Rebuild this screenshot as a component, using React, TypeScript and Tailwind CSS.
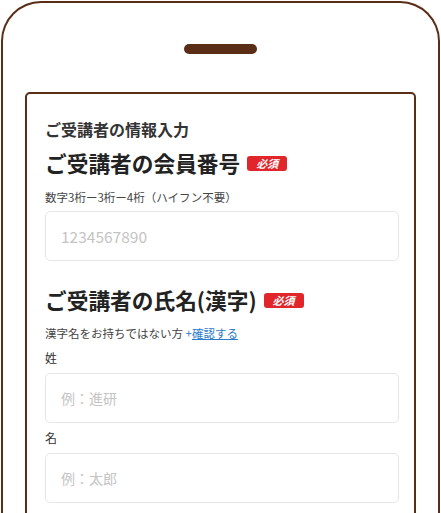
const font = "font-['Noto_Sans_CJK_JP','Noto_Sans',sans-serif]";

function Required() {
  return (
    <span className="ml-[7px] inline-flex h-[15px] w-[40px] items-center justify-center rounded-[3px] bg-[#e0262b] text-[11px] font-bold italic leading-none text-white">
      必須
    </span>
  );
}

function Field({ placeholder, size = "text-[14px]" }: { placeholder: string; size?: string }) {
  return (
    <input
      placeholder={placeholder}
      className={
        "block h-[50px] w-full rounded-[5px] border border-[#e6e6e6] bg-white px-[15px] text-[#333] outline-none placeholder:text-[#c4c4c4] " +
        size
      }
    />
  );
}

export default function App() {
  return (
    <div className={"h-[513px] overflow-hidden bg-white pt-px " + font}>
      {/* phone frame */}
      <div className="mx-px h-[560px] rounded-t-[40px] border-2 border-b-0 border-[#5a2d17] px-[22px] pt-[41px]">
        <div className="mx-auto h-[10px] w-[73px] rounded-full bg-[#5a2d17]" />

        {/* screen */}
        <div className="mt-[38px] h-[460px] rounded-[5px] border-2 border-[#5a2d17] pl-[18px] pr-[15px] pt-[23px] text-[#333]">
          <h1 className="text-[16px] font-bold leading-[24px]">ご受講者の情報入力</h1>

          <h2 className="mt-[7px] flex items-center text-[21.7px] font-bold leading-[30px] text-[#222]">
            ご受講者の会員番号
            <Required />
          </h2>
          <p className="mt-[11px] text-[11.5px] leading-[16px] text-[#444]">数字3桁ー3桁ー4桁（ハイフン不要）</p>
          <div className="mt-[6px]">
            <Field placeholder="1234567890" size="text-[15.5px]" />
          </div>

          <h2 className="mt-[24px] flex items-center text-[21.7px] font-bold leading-[30px] text-[#222]">
            ご受講者の氏名(漢字)
            <Required />
          </h2>
          <p className="mt-[10px] text-[11.5px] leading-[16px] text-[#444]">
            漢字名をお持ちではない方{" "}
            <a href="#" className="text-[#2c7bc9]">
              +<span className="underline">確認する</span>
            </a>
          </p>

          <label className="mt-[8px] block text-[12px] leading-[18px] text-[#333]">姓</label>
          <div className="mt-[6px]">
            <Field placeholder="例：進研" />
          </div>

          <label className="mt-[6px] block text-[12px] leading-[18px] text-[#333]">名</label>
          <div className="mt-[6px]">
            <Field placeholder="例：太郎" />
          </div>
        </div>
      </div>
    </div>
  );
}
